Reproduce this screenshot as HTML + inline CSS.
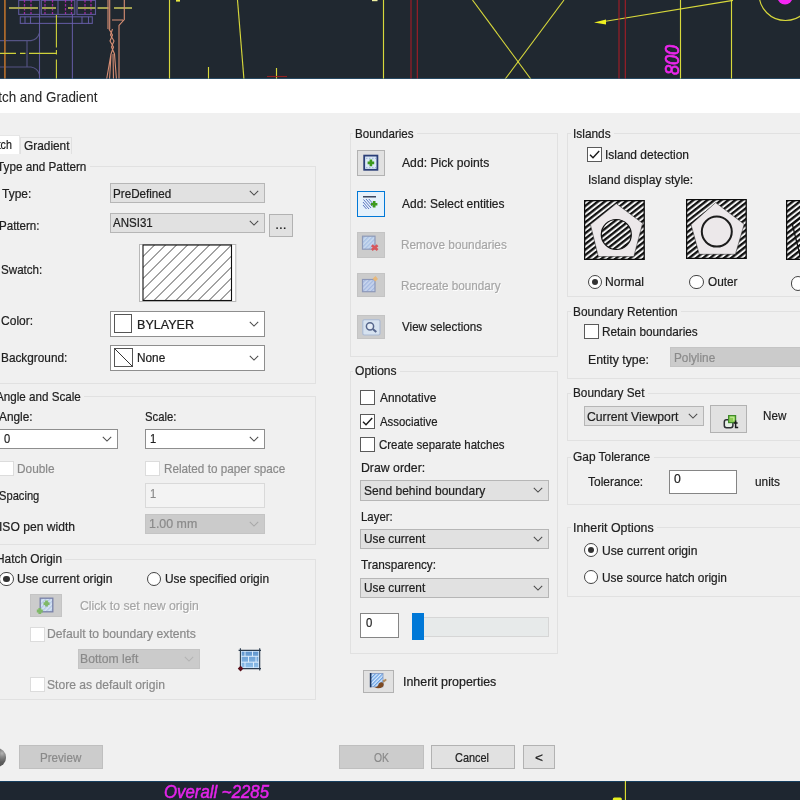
<!DOCTYPE html>
<html lang="en"><head><meta charset="utf-8"><title>Hatch and Gradient</title>
<style>
html,body{margin:0;padding:0;}
body{width:800px;height:800px;overflow:hidden;position:relative;background:#f0f0f0;font-family:"Liberation Sans",sans-serif;font-size:13.5px;color:#202020;}
#w{position:absolute;left:-12px;top:-12px;width:824px;height:824px;overflow:hidden;will-change:transform;filter:blur(0.45px);background:#f0f0f0;}
#v{position:absolute;left:12px;top:12px;width:800px;height:800px;}
#v>*{position:absolute;box-sizing:border-box;}
.cad{display:block;overflow:visible}
.cadbg{background:#202830}
.cadbg2{background:#1e2630}
.title{background:#fff}
.body{background:#f0f0f0}
.t{-webkit-text-stroke:0.22px currentColor;line-height:16px;white-space:pre;display:inline-block;transform:scaleX(0.90);transform-origin:0 50%;}
.ttl{color:#262626;-webkit-text-stroke:0.05px currentColor}
.dis{color:#8a8a8a}
.emb{color:#a6a6a6;text-shadow:1px 1px 0 #fff}
.grp{border:1px solid #e1e1e1}
.glabbg{background:#f0f0f0}
.tabsel{background:#fff;border:1px solid #e6e6e6;border-bottom:none}
.tab{background:#f0f0f0;border:1px solid #e0e0e0;border-bottom:none}
.cb{background:#e1e1e1;border:1px solid #b6b6b6}
.cb.ed{background:#fff;border-color:#8e8e8e}
.cb.dis{background:#cbcbcb;border-color:#c4c4c4}
.cb .chev{position:absolute;right:5px;top:50%;margin-top:-3px}
.btn{background:#e1e1e1;border:1px solid #b2b2b2}
.btn.dis{background:#cccccc;border-color:#bfbfbf}
.ibtn{background:#e1e1e1;border:1px solid #b2b2b2}
.ibtn.dis{background:#cccccc;border-color:#c4c4c4}
.ibtn.foc{background:#e5f1fb;border:1.5px solid #0078d7}
.ibtn svg{position:absolute;left:50%;top:50%}
.inp{background:#fff;border:1px solid #858585}
.inp.dis{background:#f3f3f3;border-color:#d9d9d9}
.sw{background:#fff;border:1px solid #555}
.chk{background:#fff;border:1px solid #5a5a5a}
.chk.dis{border-color:#dcdcdc;background:#fff}
.rad{border:1px solid #444;border-radius:50%;background:#fff}
.rad i{position:absolute;left:3px;top:3px;right:3px;bottom:3px;border-radius:50%;background:#333}
.track{background:#e7eaea;border:1px solid #d6d6d6}
.thumb{background:#0078d7}
.help{width:18.4px;height:18.4px;border-radius:50%;background:radial-gradient(circle at 78% 28%,#b4b4b4 0,#8a8a8a 18%,#5c5c5c 45%,#4e4e4e 100%)}
.abs{display:block}
</style></head>
<body>
<div id="w"><div id="v">
<div class="cadbg" style="left:-12px;top:-12px;width:824px;height:92px;"></div>
<div class="cadbg2" style="left:-12px;top:780.7px;width:824px;height:31.299999999999955px;"></div>
<svg class="cad" width="800" height="80" viewBox="0 0 800 80" style="left:0;top:0">
<rect width="800" height="80" fill="#202830"/>
<g fill="none" stroke-width="1.1">
 <!-- left assembly -->
 <g stroke="#6a60ae" stroke-opacity="0.85">
  <rect x="18.7" y="0.4" width="21" height="14"/>
  <rect x="41.3" y="0.4" width="33.5" height="14"/>
  <rect x="77" y="0.4" width="18.5" height="14"/>
  <rect x="20.3" y="16.8" width="72" height="6.6"/>
  <path d="M39.5 14 V80 M72.4 14 V80 M25 16.8 v6.6 M30.5 16.8 v6.6 M82 16.8 v6.6 M88.5 16.8 v6.6 M58 -2 V14.3"/>
  <path d="M0 40.6 H31 Q37.5 39.5 39.5 33 M0 67 H31 Q37.5 68 39.5 74.5 M27 40.6 V67" stroke="#5f5c94"/>
 </g>
 <g stroke="#b428b4" stroke-width="1.3" stroke-dasharray="2.4 1.6" stroke-opacity="0.85">
  <path d="M24.5 0 V14 M31 0 V14 M45 0 V14 M52.5 0 V14 M65.5 0 V14 M71.5 0 V14 M85 0 V14 M91 0 V14"/>
 </g>
 <path d="M4.9 0 V80" stroke="#a8682c" stroke-width="1.8"/>
 <path d="M9 7.9 H132" stroke="#a0a050" stroke-width="2" stroke-dasharray="29 4 14 12 5.5 4.5 17.5 2 11 5.5 19 0"/>
 <path d="M56.4 15 V80" stroke="#cfd23a" stroke-width="1.1" stroke-dasharray="32.5 2.5 4.5 5 30"/>
 <path d="M0 53.4 H57" stroke="#cfd23a" stroke-width="1.1" stroke-dasharray="16 4 5.5 3.5 28"/>
 <!-- bolt -->
 <g stroke="#d98f74" stroke-width="1.1">
  <path d="M108 0 V29 M109.7 0 V29 M124.3 0 V19.5 L119 25.5 V80 M112 20 H123"/>
  <path d="M109 29 L112.5 35 L110 41 L113.5 47 L111 54 L106.5 80 M112.5 29 L110.5 35 L114 41 L111.5 47 L114.5 54 L116.5 80 M111 54 L109.5 80 M113 54 L113.5 80"/>
 </g>
 <!-- yellow lines -->
 <g stroke="#e2e23c" stroke-width="1.15" stroke-opacity="0.95">
  <path d="M169.5 0 V80"/>
  <path d="M237.5 0 L244 80"/>
  <path d="M208.5 67 V80"/>
  <path d="M276.5 68 V80"/>
  <path d="M383.5 0 V80"/>
  <path d="M472.5 0 L531.5 80"/>
  <path d="M564 0 L504.5 80"/>
  <path d="M604 21.5 L733 0.4"/>
  <path d="M680.5 0 V80"/>
  <path d="M731.5 0 V80"/>
  <circle cx="785.5" cy="-6" r="26.5"/>
 </g>
 <path d="M594 22.5 L606 19.5 L606 24.5 Z" fill="#f0f020" stroke="none"/>
 <rect x="176" y="0" width="4" height="1.6" fill="#e8e840" stroke="none"/>
 <rect x="372" y="0" width="5.5" height="1.2" fill="#f0f0a0" stroke="none"/>
 <g stroke="#b41c26" stroke-width="1.1" stroke-opacity="0.9">
  <path d="M411 0 V80 M417.3 0 V80 M619 0 V80 M625.3 0 V80"/>
  <path d="M267 76.5 H287" stroke="#9a2020"/>
 </g>
 <circle cx="785" cy="-3" r="7.6" fill="#f426f4" stroke="none"/>
</g>
<text transform="translate(678.6,75) rotate(-90)" font-family="Liberation Sans, sans-serif" font-size="19.5" font-style="italic" fill="#ee26ee" stroke="#ee26ee" stroke-width="0.7" textLength="30" lengthAdjust="spacingAndGlyphs">800</text>
<rect x="-12" y="78.5" width="824" height="1" fill="#2f6a94"/>
</svg>
<div class="title" style="left:-12px;top:79.3px;width:824px;height:33.7px;"></div>
<div class="body" style="left:-12px;top:113px;width:824px;height:668px;"></div>
<span class="t ttl" style="left:-18.60px;top:88.58px;font-size:14.2px;transform:scaleX(0.947);">Hatch and Gradient</span>
<svg class="cad" width="800" height="20" viewBox="0 0 800 20" style="left:0;top:780.7px">
<rect width="800" height="20" fill="#1e2630"/>
<rect x="-12" width="824" height="1" fill="#173f5f"/>
<path d="M625.4 0 V20" stroke="#e6e632" stroke-width="1.1" fill="none"/>
<rect x="612.8" y="16.6" width="9" height="4" rx="1.5" fill="#e8f020"/>
<text x="164" y="17.1" font-family="Liberation Sans, sans-serif" font-size="19" font-style="italic" fill="#e424ea" stroke="#e424ea" stroke-width="0.55" textLength="105" lengthAdjust="spacingAndGlyphs">Overall ~2285</text>
</svg>
<div class="tabsel" style="left:-22px;top:134.5px;width:42px;height:19.5px;"></div>
<div class="tab" style="left:20px;top:137px;width:52px;height:17px;"></div>
<span class="t" style="left:-15.60px;top:137.02px;transform:scaleX(0.791);">Hatch</span>
<span class="t" style="left:23.50px;top:137.92px;transform:scaleX(0.879);">Gradient</span>
<div class="grp" style="left:-5px;top:166px;width:320.5px;height:217.5px;"></div>
<div class="glabbg" style="left:-5.1px;top:158px;width:94.89999999999999px;height:16px;"></div>
<span class="t" style="left:-2.90px;top:158.62px;transform:scaleX(0.869);">Type and Pattern</span>
<span class="t" style="left:1.70px;top:185.62px;transform:scaleX(0.887);">Type:</span>
<div class="cb" style="left:110px;top:183px;width:155px;height:20px;"><svg class="chev" width="10" height="6" viewBox="0 0 10 6"><path d="M0.8 0.8 L5 5 L9.2 0.8" fill="none" stroke="#4c4c4c" stroke-width="1.05"/></svg></div>
<span class="t" style="left:112.70px;top:185.52px;transform:scaleX(0.863);">PreDefined</span>
<span class="t" style="left:-0.80px;top:218.12px;transform:scaleX(0.857);">Pattern:</span>
<div class="cb" style="left:110px;top:213px;width:155px;height:20px;"><svg class="chev" width="10" height="6" viewBox="0 0 10 6"><path d="M0.8 0.8 L5 5 L9.2 0.8" fill="none" stroke="#4c4c4c" stroke-width="1.05"/></svg></div>
<span class="t" style="left:113.30px;top:215.32px;transform:scaleX(0.853);">ANSI31</span>
<div class="btn" style="left:269px;top:214px;width:24px;height:23px;"></div>
<span class="t" style="left:275.20px;top:216.82px;transform:scaleX(1.000);">...</span>
<span class="t" style="left:0.90px;top:262.02px;transform:scaleX(0.860);">Swatch:</span>
<svg class="abs" width="98" height="58" viewBox="0 0 98 58" style="left:138.5px;top:244px">
<rect x="0.5" y="0.5" width="96.3" height="57" fill="#fff" stroke="#b8b8b8"/>
<defs><clipPath id="swc"><rect x="4" y="1" width="88.5" height="55.5"/></clipPath></defs>
<g clip-path="url(#swc)" stroke="#333" stroke-width="0.9" fill="none">
<path d="M-40 56.5 l60 -60 M-29 56.5 l60 -60 M-18 56.5 l60 -60 M-7 56.5 l60 -60 M4 56.5 l60 -60 M15 56.5 l60 -60 M26 56.5 l60 -60 M37 56.5 l60 -60 M48 56.5 l60 -60 M59 56.5 l60 -60 M70 56.5 l60 -60 M81 56.5 l60 -60"/>
</g>
<rect x="4" y="1" width="88.5" height="55.5" fill="none" stroke="#111" stroke-width="1.1"/>
</svg>
<span class="t" style="left:0.90px;top:313.32px;transform:scaleX(0.891);">Color:</span>
<div class="cb ed" style="left:110px;top:310.5px;width:155px;height:26.5px;"><svg class="chev" width="10" height="6" viewBox="0 0 10 6"><path d="M0.8 0.8 L5 5 L9.2 0.8" fill="none" stroke="#4c4c4c" stroke-width="1.05"/></svg></div>
<div class="sw" style="left:113.6px;top:314.4px;width:18.80000000000001px;height:18.80000000000001px;"></div>
<span class="t" style="left:136.50px;top:316.50px;font-size:13px;transform:scaleX(0.966);">BYLAYER</span>
<span class="t" style="left:0.90px;top:349.52px;transform:scaleX(0.875);">Background:</span>
<div class="cb ed" style="left:110px;top:344.5px;width:155px;height:26.5px;"><svg class="chev" width="10" height="6" viewBox="0 0 10 6"><path d="M0.8 0.8 L5 5 L9.2 0.8" fill="none" stroke="#4c4c4c" stroke-width="1.05"/></svg></div>
<svg class="abs" width="19" height="19" viewBox="0 0 19 19" style="left:113.6px;top:347.9px"><rect x="0.5" y="0.5" width="18" height="18" fill="#fff" stroke="#555"/><path d="M0.5 0.5 L18.5 18.5" stroke="#333" stroke-width="1" fill="none"/></svg>
<span class="t" style="left:136.50px;top:350.30px;font-size:13px;transform:scaleX(0.907);">None</span>
<div class="grp" style="left:-5px;top:396px;width:320.5px;height:149px;"></div>
<div class="glabbg" style="left:-6.0px;top:388px;width:90.3px;height:16px;"></div>
<span class="t" style="left:-3.80px;top:389.12px;transform:scaleX(0.862);">Angle and Scale</span>
<span class="t" style="left:-0.60px;top:408.82px;transform:scaleX(0.878);">Angle:</span>
<span class="t" style="left:144.90px;top:408.82px;transform:scaleX(0.837);">Scale:</span>
<div class="cb ed" style="left:-1px;top:429px;width:119px;height:20px;"><svg class="chev" width="10" height="6" viewBox="0 0 10 6"><path d="M0.8 0.8 L5 5 L9.2 0.8" fill="none" stroke="#4c4c4c" stroke-width="1.05"/></svg></div>
<span class="t" style="left:4.10px;top:430.62px;transform:scaleX(0.825);">0</span>
<div class="cb ed" style="left:145px;top:429px;width:120px;height:20px;"><svg class="chev" width="10" height="6" viewBox="0 0 10 6"><path d="M0.8 0.8 L5 5 L9.2 0.8" fill="none" stroke="#4c4c4c" stroke-width="1.05"/></svg></div>
<span class="t" style="left:150.30px;top:430.62px;transform:scaleX(0.825);">1</span>
<div class="chk dis" style="left:-1.3px;top:461.2px;width:15.0px;height:15.0px;"></div>
<span class="t dis" style="left:16.70px;top:461.32px;transform:scaleX(0.877);">Double</span>
<div class="chk dis" style="left:145.2px;top:461.2px;width:15.0px;height:15.0px;"></div>
<span class="t dis" style="left:163.50px;top:461.32px;transform:scaleX(0.868);">Related to paper space</span>
<span class="t" style="left:-0.60px;top:488.32px;transform:scaleX(0.826);">Spacing</span>
<div class="inp dis" style="left:145.2px;top:483.4px;width:119.80000000000001px;height:24.600000000000023px;"></div>
<span class="t dis" style="left:150.30px;top:485.62px;transform:scaleX(0.825);">1</span>
<span class="t" style="left:-1.30px;top:518.72px;transform:scaleX(0.896);">ISO pen width</span>
<div class="cb dis" style="left:145.2px;top:513.8px;width:119.80000000000001px;height:20.200000000000045px;"><svg class="chev" width="10" height="6" viewBox="0 0 10 6"><path d="M0.8 0.8 L5 5 L9.2 0.8" fill="none" stroke="#a8a8a8" stroke-width="1.05"/></svg></div>
<span class="t dis" style="left:149.00px;top:516.32px;transform:scaleX(0.918);">1.00 mm</span>
<div class="grp" style="left:-5px;top:558.5px;width:320.5px;height:141.0px;"></div>
<div class="glabbg" style="left:-6.5px;top:550.5px;width:71.5px;height:16.0px;"></div>
<span class="t" style="left:-4.30px;top:551.32px;transform:scaleX(0.880);">Hatch Origin</span>
<div class="rad" style="left:-0.7999999999999998px;top:571.7px;width:14.6px;height:14.6px"><i></i></div>
<span class="t" style="left:16.70px;top:571.32px;transform:scaleX(0.896);">Use current origin</span>
<div class="rad" style="left:146.7px;top:571.7px;width:14.6px;height:14.6px"></div>
<span class="t" style="left:165.00px;top:571.32px;transform:scaleX(0.883);">Use specified origin</span>
<div class="ibtn dis" style="left:30px;top:593.5px;width:31.5px;height:23.5px;"><svg width="24" height="20" viewBox="0 0 24 20" style="margin-left:-15.2px;margin-top:-9.6px;"><defs><pattern id="h7" width="3" height="3" patternUnits="userSpaceOnUse" patternTransform="rotate(45)"><rect width="3" height="3" fill="#d6e4f2"/><rect width="1.3" height="3" fill="#b4c8e6"/></pattern></defs><rect x="9.2" y="2.2" width="12.6" height="13.6" fill="url(#h7)" stroke="#7880a8" stroke-width="1.3"/><path d="M12.5 7.6 H18.5 M15.5 4.6 V10.6" stroke="#7fb868" stroke-width="2.8" fill="none"/><path d="M5.800000000000001 15 H11.8 M8.8 12.0 V18.0" stroke="#7fb868" stroke-width="2.8" fill="none"/></svg></div>
<span class="t emb" style="left:79.70px;top:598.02px;transform:scaleX(0.905);">Click to set new origin</span>
<div class="chk dis" style="left:29.8px;top:626.8px;width:14.999999999999996px;height:15.0px;"></div>
<span class="t dis" style="left:47.30px;top:626.32px;transform:scaleX(0.901);">Default to boundary extents</span>
<div class="cb dis" style="left:78px;top:649px;width:122px;height:20px;"><svg class="chev" width="10" height="6" viewBox="0 0 10 6"><path d="M0.8 0.8 L5 5 L9.2 0.8" fill="none" stroke="#b4b4b4" stroke-width="1.05"/></svg></div>
<span class="t dis" style="left:80.20px;top:651.32px;transform:scaleX(0.903);">Bottom left</span>
<svg class="abs" width="28" height="26" viewBox="0 0 28 26" style="left:236px;top:646px"><defs><linearGradient id="og" x1="0" y1="0" x2="0" y2="1"><stop offset="0" stop-color="#5f93cc"/><stop offset="1" stop-color="#8fc0ea"/></linearGradient></defs><rect x="5" y="5" width="18" height="17" fill="url(#og)"/><path d="M5 10.3 H23 M5 16.2 H23 M9 5 V10.3 M16.5 5 V10.3 M12.5 10.3 V16.2 M20 10.3 V16.2 M9 16.2 V22 M17.5 16.2 V22" stroke="#e4f2ff" stroke-width="0.9" fill="none"/><rect x="5.2" y="5.2" width="17.6" height="16.6" fill="none" stroke="#d8ecff" stroke-width="1"/><path d="M2.6 4.4 H25 M4.4 2.3 V24.5 M23.7 2.3 V24.5 M2.6 22.6 H25" stroke="#2b3a4c" stroke-width="1.1" fill="none"/><path d="M4.6 19.8 L7.4 22.6 L4.6 25.4 L1.8 22.6 Z" fill="#5c0f1a"/></svg>
<div class="chk dis" style="left:29.8px;top:677.2px;width:14.999999999999996px;height:15.0px;"></div>
<span class="t dis" style="left:47.30px;top:677.02px;transform:scaleX(0.898);">Store as default origin</span>
<div class="help" style="left:-12px;top:748.3px"></div>
<div class="btn dis" style="left:19.3px;top:745px;width:83.5px;height:24px;"></div>
<span class="t dis" style="left:40.20px;top:749.52px;transform:scaleX(0.860);">Preview</span>
<div class="btn dis" style="left:339.2px;top:745px;width:84.80000000000001px;height:24px;"></div>
<span class="t dis" style="left:373.50px;top:749.52px;transform:scaleX(0.769);">OK</span>
<div class="btn" style="left:431px;top:745px;width:84px;height:24px;"></div>
<span class="t" style="left:455.20px;top:749.52px;transform:scaleX(0.809);">Cancel</span>
<div class="btn" style="left:523px;top:745px;width:32px;height:24px;"></div>
<span class="t" style="left:534.70px;top:749.52px;transform:scaleX(1.014);">&lt;</span>
<div class="grp" style="left:349.5px;top:132.5px;width:208.5px;height:224.0px;"></div>
<div class="glabbg" style="left:352.7px;top:124.5px;width:64.10000000000002px;height:16.0px;"></div>
<span class="t" style="left:354.90px;top:125.82px;transform:scaleX(0.858);">Boundaries</span>
<div class="ibtn" style="left:357.2px;top:150px;width:27.600000000000023px;height:25.5px;"><svg width="16" height="17" viewBox="0 0 16 17" style="margin-left:-7.8px;margin-top:-9.1px;"><rect x="1.2" y="1.6" width="13.2" height="14.2" fill="#dbe9f7" stroke="#2b3f78" stroke-width="1.8"/><path d="M3 4.3 H13 M3 13.6 H13" stroke="#9fb6d8" stroke-width="1" stroke-dasharray="1.5 1.5" fill="none"/><path d="M4.6000000000000005 8.9 H11.2 M7.9 5.6000000000000005 V12.2" stroke="#3c9a1e" stroke-width="2.6" fill="none"/></svg></div>
<div class="ibtn foc" style="left:357.2px;top:191px;width:27.600000000000023px;height:25.5px;"><svg width="20" height="18" viewBox="0 0 20 18" style="margin-left:-10.7px;margin-top:-10px;"><path d="M3 2.8 H16" stroke="#1f2a44" stroke-width="1.3" fill="none"/><path d="M3.5 5.5 l7.5 8.5 M6 5 l6.5 7.5 M8.8 5 l4 4.5 M3 8 l6 7 M3 11 l3.5 4" stroke="#4a66b8" stroke-width="0.9" fill="none"/><path d="M11.0 10.3 H17.4 M14.2 7.1000000000000005 V13.5" stroke="#3c9a1e" stroke-width="2.6" fill="none"/></svg></div>
<div class="ibtn dis" style="left:357.2px;top:232px;width:27.600000000000023px;height:26px;"><svg width="20" height="18" viewBox="0 0 20 18" style="margin-left:-9.5px;margin-top:-9.6px;"><defs><pattern id="h2" width="3" height="3" patternUnits="userSpaceOnUse" patternTransform="rotate(45)"><rect width="3" height="3" fill="#c9d9ee"/><rect width="1.3" height="3" fill="#a5bfe4"/></pattern></defs><rect x="1.5" y="1.2" width="12.5" height="13" fill="url(#h2)" stroke="#8e9ab8" stroke-width="1.2"/><path d="M10.8 10.3 l5.8 4.8 M16.6 10.3 l-5.8 4.8" stroke="#d8575c" stroke-width="2.6" fill="none"/></svg></div>
<div class="ibtn dis" style="left:357.2px;top:273px;width:27.600000000000023px;height:24px;"><svg width="20" height="18" viewBox="0 0 20 18" style="margin-left:-9.5px;margin-top:-9.8px;"><defs><pattern id="h3" width="3" height="3" patternUnits="userSpaceOnUse" patternTransform="rotate(45)"><rect width="3" height="3" fill="#c9d6ee"/><rect width="1.3" height="3" fill="#a3b7e0"/></pattern></defs><rect x="1.5" y="4.5" width="12.5" height="12.2" fill="url(#h3)" stroke="#8d98ba" stroke-width="1.2"/><path d="M11.5 3.8 L14.6 1 L17 4 L14.4 6.6 Z" fill="#e8b87a"/></svg></div>
<div class="ibtn dis" style="left:357.2px;top:315px;width:27.600000000000023px;height:24px;"><svg width="19" height="17" viewBox="0 0 19 17" style="margin-left:-9px;margin-top:-8.3px;"><rect x="0.8" y="0.8" width="17.2" height="15.2" rx="1.5" fill="#d6e2f0" stroke="#a9b9d4" stroke-width="1.1"/><circle cx="8" cy="7.3" r="3.6" fill="#e4ecf6" stroke="#56668c" stroke-width="1.5"/><path d="M10.8 10 L14.3 13" stroke="#56668c" stroke-width="2" fill="none"/></svg></div>
<span class="t" style="left:401.70px;top:154.82px;transform:scaleX(0.901);">Add: Pick points</span>
<span class="t" style="left:401.70px;top:195.52px;transform:scaleX(0.887);">Add: Select entities</span>
<span class="t emb" style="left:400.90px;top:236.92px;transform:scaleX(0.876);">Remove boundaries</span>
<span class="t emb" style="left:400.90px;top:278.12px;transform:scaleX(0.867);">Recreate boundary</span>
<span class="t" style="left:401.70px;top:319.32px;transform:scaleX(0.862);">View selections</span>
<div class="grp" style="left:349.5px;top:371px;width:208.5px;height:282.5px;"></div>
<div class="glabbg" style="left:352.7px;top:363px;width:47.10000000000002px;height:16px;"></div>
<span class="t" style="left:354.90px;top:362.82px;transform:scaleX(0.894);">Options</span>
<div class="chk" style="left:360.4px;top:390.1px;width:15.0px;height:15.0px;"></div>
<span class="t" style="left:379.70px;top:390.12px;transform:scaleX(0.882);">Annotative</span>
<div class="chk" style="left:360.4px;top:413.7px;width:15.0px;height:15.0px;"><svg width="15" height="15" viewBox="0 0 15 15" style="position:absolute;left:-1px;top:-1px"><path d="M3 7.8 L6 10.8 L12.2 4" fill="none" stroke="#1a1a1a" stroke-width="1.4"/></svg></div>
<span class="t" style="left:379.70px;top:413.92px;transform:scaleX(0.842);">Associative</span>
<div class="chk" style="left:360.4px;top:437.1px;width:15.0px;height:15.0px;"></div>
<span class="t" style="left:379.20px;top:437.12px;transform:scaleX(0.849);">Create separate hatches</span>
<span class="t" style="left:360.50px;top:459.52px;transform:scaleX(0.910);">Draw order:</span>
<div class="cb" style="left:360px;top:480px;width:188.5px;height:20.5px;"><svg class="chev" width="10" height="6" viewBox="0 0 10 6"><path d="M0.8 0.8 L5 5 L9.2 0.8" fill="none" stroke="#4c4c4c" stroke-width="1.05"/></svg></div>
<span class="t" style="left:363.50px;top:483.02px;transform:scaleX(0.892);">Send behind boundary</span>
<span class="t" style="left:360.50px;top:508.82px;transform:scaleX(0.845);">Layer:</span>
<div class="cb" style="left:360px;top:529px;width:188.5px;height:20px;"><svg class="chev" width="10" height="6" viewBox="0 0 10 6"><path d="M0.8 0.8 L5 5 L9.2 0.8" fill="none" stroke="#4c4c4c" stroke-width="1.05"/></svg></div>
<span class="t" style="left:363.50px;top:531.32px;transform:scaleX(0.877);">Use current</span>
<span class="t" style="left:360.90px;top:557.02px;transform:scaleX(0.875);">Transparency:</span>
<div class="cb" style="left:360px;top:577.5px;width:188.5px;height:20.0px;"><svg class="chev" width="10" height="6" viewBox="0 0 10 6"><path d="M0.8 0.8 L5 5 L9.2 0.8" fill="none" stroke="#4c4c4c" stroke-width="1.05"/></svg></div>
<span class="t" style="left:363.50px;top:580.02px;transform:scaleX(0.877);">Use current</span>
<div class="inp" style="left:360px;top:613px;width:38.5px;height:24.5px;"></div>
<span class="t" style="left:365.90px;top:614.52px;transform:scaleX(0.838);">0</span>
<div class="track" style="left:412px;top:617px;width:136.5px;height:19.5px;"></div>
<div class="thumb" style="left:411.5px;top:613px;width:12.0px;height:27px;"></div>
<div class="ibtn" style="left:363px;top:669.5px;width:31px;height:23.5px;"><svg width="20" height="18" viewBox="0 0 20 18" style="margin-left:-9.6px;margin-top:-9.6px;"><defs><pattern id="h5" width="2.6" height="2.6" patternUnits="userSpaceOnUse" patternTransform="rotate(45)"><rect width="2.6" height="2.6" fill="#d9ebff"/><rect width="1.3" height="2.6" fill="#6ea3e2"/></pattern></defs><rect x="1.6" y="1.5" width="12.4" height="13.3" fill="url(#h5)" stroke="#7f97c0" stroke-width="0.8"/><path d="M1.6 1 V15.3" stroke="#1d3760" stroke-width="1.6"/><path d="M13.5 8.6 L17 6.8 L17.6 8.3 L14.6 10.8 Z" fill="#b08a5c"/><path d="M5.2 15.6 Q9 15.4 9.8 11.4 Q12 9.3 14.3 10.7 Q15.6 13 13.6 14.9 Q10.5 17 5.2 15.6 Z" fill="#7d4a22"/></svg></div>
<span class="t" style="left:402.70px;top:673.82px;transform:scaleX(0.921);">Inherit properties</span>
<div class="grp" style="left:567px;top:132.5px;width:247px;height:164.5px;"></div>
<div class="glabbg" style="left:571.1px;top:124.5px;width:43.19999999999993px;height:16.0px;"></div>
<span class="t" style="left:573.30px;top:125.82px;transform:scaleX(0.881);">Islands</span>
<div class="chk" style="left:587.3px;top:147.2px;width:15.0px;height:15.0px;"><svg width="15" height="15" viewBox="0 0 15 15" style="position:absolute;left:-1px;top:-1px"><path d="M3 7.8 L6 10.8 L12.2 4" fill="none" stroke="#1a1a1a" stroke-width="1.4"/></svg></div>
<span class="t" style="left:605.20px;top:146.82px;transform:scaleX(0.888);">Island detection</span>
<span class="t" style="left:588.30px;top:171.72px;transform:scaleX(0.899);">Island display style:</span>
<svg class="abs" width="61" height="60" viewBox="0 0 61 60" style="left:584.2px;top:200px"><defs><pattern id="sta" width="4.3" height="4.3" patternUnits="userSpaceOnUse" patternTransform="rotate(-38)"><rect width="4.3" height="4.3" fill="#f4f4f4"/><rect y="0" width="4.3" height="2.3" fill="#101010"/></pattern></defs><rect x="0.6" y="0.6" width="59.6" height="58.8" fill="url(#sta)" stroke="#0c0c0c" stroke-width="1.3"/><polygon points="32.3,3.6 58.6,23.3 49.8,56.6 14.3,56.6 6.4,24.6" fill="#ece8ea" stroke="#1a1a1a" stroke-width="0.5"/><circle cx="32.3" cy="34.5" r="15" fill="url(#sta)" stroke="#141414" stroke-width="1.2"/></svg><svg class="abs" width="61" height="60" viewBox="0 0 61 60" style="left:685.6px;top:199.3px"><defs><pattern id="stb" width="4.3" height="4.3" patternUnits="userSpaceOnUse" patternTransform="rotate(-38)"><rect width="4.3" height="4.3" fill="#f4f4f4"/><rect y="0" width="4.3" height="2.3" fill="#101010"/></pattern></defs><rect x="0.6" y="0.6" width="59.6" height="58.8" fill="url(#stb)" stroke="#0c0c0c" stroke-width="1.3"/><polygon points="29.6,3.6 58.2,25.2 49.4,55.3 13.2,55.3 5,25.6" fill="#ece8ea" stroke="#1a1a1a" stroke-width="0.5"/><circle cx="30.8" cy="32.6" r="15" fill="#ece8ea" stroke="#1c1c1c" stroke-width="2"/></svg><svg class="abs" width="61" height="60" viewBox="0 0 61 60" style="left:786px;top:200.2px"><defs><pattern id="stc" width="4.3" height="4.3" patternUnits="userSpaceOnUse" patternTransform="rotate(-38)"><rect width="4.3" height="4.3" fill="#f4f4f4"/><rect y="0" width="4.3" height="2.3" fill="#101010"/></pattern></defs><rect x="0.6" y="0.6" width="59.6" height="58.8" fill="url(#stc)" stroke="#0c0c0c" stroke-width="1.3"/><polygon points="32.3,3.6 58.6,23.3 49.8,56.6 14.3,56.6 6.4,24.6" fill="none" stroke="#111" stroke-width="1.3"/><circle cx="32.3" cy="34.5" r="15" fill="none" stroke="#141414" stroke-width="1.2"/></svg>
<div class="rad" style="left:587.7px;top:274.7px;width:14.6px;height:14.6px"><i></i></div>
<span class="t" style="left:605.20px;top:273.82px;transform:scaleX(0.896);">Normal</span>
<div class="rad" style="left:689.2px;top:274.7px;width:14.6px;height:14.6px"></div>
<span class="t" style="left:707.70px;top:273.82px;transform:scaleX(0.874);">Outer</span>
<div class="rad" style="left:790.5px;top:276.4px;width:14.6px;height:14.6px"></div>
<div class="grp" style="left:567px;top:311px;width:247px;height:67.5px;"></div>
<div class="glabbg" style="left:571.1px;top:303px;width:110.19999999999993px;height:16px;"></div>
<span class="t" style="left:573.30px;top:303.82px;transform:scaleX(0.877);">Boundary Retention</span>
<div class="chk" style="left:584.3px;top:324.2px;width:15.0px;height:15.0px;"></div>
<span class="t" style="left:602.20px;top:323.82px;transform:scaleX(0.874);">Retain boundaries</span>
<span class="t" style="left:588.30px;top:352.02px;transform:scaleX(0.913);">Entity type:</span>
<div class="cb dis" style="left:670px;top:347.2px;width:142px;height:20.30000000000001px;"></div>
<span class="t dis" style="left:673.50px;top:349.82px;transform:scaleX(0.871);">Polyline</span>
<div class="grp" style="left:567px;top:393px;width:247px;height:48px;"></div>
<div class="glabbg" style="left:571.1px;top:385px;width:76.89999999999998px;height:16px;"></div>
<span class="t" style="left:573.30px;top:384.82px;transform:scaleX(0.873);">Boundary Set</span>
<div class="cb" style="left:584px;top:406px;width:120px;height:20px;"><svg class="chev" width="10" height="6" viewBox="0 0 10 6"><path d="M0.8 0.8 L5 5 L9.2 0.8" fill="none" stroke="#4c4c4c" stroke-width="1.05"/></svg></div>
<span class="t" style="left:587.20px;top:408.82px;transform:scaleX(0.904);">Current Viewport</span>
<div class="ibtn" style="left:710.2px;top:405px;width:36.39999999999998px;height:27.5px;"><svg width="18" height="16" viewBox="0 0 18 16" style="margin-left:-5.4px;margin-top:-4.6px;"><rect x="1.3" y="5.8" width="8.6" height="8" rx="2.2" fill="#e6efe6" stroke="#2e3034" stroke-width="1.5"/><rect x="5.6" y="1.6" width="7" height="7" fill="#8ccc54" stroke="#3f8a2a" stroke-width="1.2"/><path d="M7.2 3.2 h3.6 v3.6" fill="none" stroke="#c8f0a0" stroke-width="1"/><path d="M12.6 6.4 V13.6 H15.2 M10.8 9 H14.6" fill="none" stroke="#1a1c1e" stroke-width="1.5"/></svg></div>
<span class="t" style="left:762.70px;top:408.02px;transform:scaleX(0.862);">New</span>
<div class="grp" style="left:567px;top:457px;width:247px;height:48px;"></div>
<div class="glabbg" style="left:571.1px;top:449px;width:82.69999999999993px;height:16px;"></div>
<span class="t" style="left:573.30px;top:449.02px;transform:scaleX(0.882);">Gap Tolerance</span>
<span class="t" style="left:588.30px;top:473.82px;transform:scaleX(0.886);">Tolerance:</span>
<div class="inp" style="left:669px;top:469.5px;width:68px;height:24.5px;"></div>
<span class="t" style="left:674.20px;top:470.82px;transform:scaleX(0.905);">0</span>
<span class="t" style="left:754.70px;top:473.82px;transform:scaleX(0.876);">units</span>
<div class="grp" style="left:567px;top:527px;width:247px;height:70px;"></div>
<div class="glabbg" style="left:571.1px;top:519px;width:86.19999999999993px;height:16px;"></div>
<span class="t" style="left:573.30px;top:519.52px;transform:scaleX(0.919);">Inherit Options</span>
<div class="rad" style="left:583.7px;top:542.7px;width:14.6px;height:14.6px"><i></i></div>
<span class="t" style="left:602.20px;top:542.52px;transform:scaleX(0.896);">Use current origin</span>
<div class="rad" style="left:583.7px;top:569.7px;width:14.6px;height:14.6px"></div>
<span class="t" style="left:602.20px;top:569.52px;transform:scaleX(0.881);">Use source hatch origin</span>
</div></div>
</body></html>
